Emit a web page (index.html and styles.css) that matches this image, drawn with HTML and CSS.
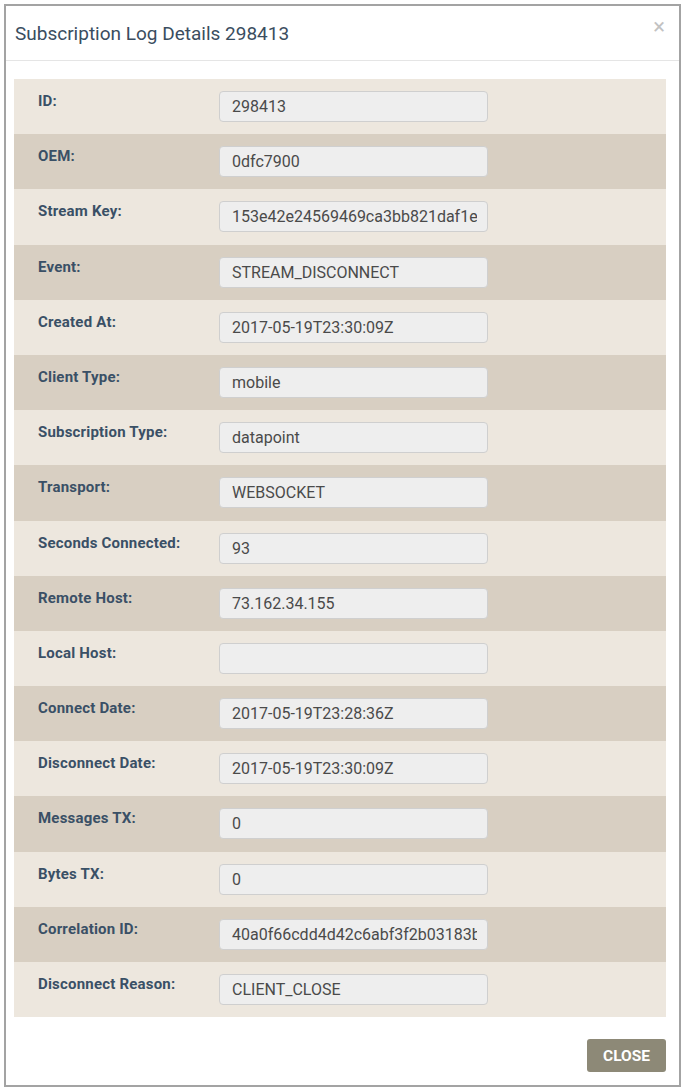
FILE: index.html
```html
<!DOCTYPE html>
<html lang="en">
<head>
  <meta charset="UTF-8" />
  <meta name="viewport" content="width=device-width, initial-scale=1.0" />
  <title>Subscription Log Details</title>
  <link rel="stylesheet" href="styles.css">
</head>
<body>
  <!-- Modal -->
  <div class="modal">
    <div class="modal-header">
      <h4>Subscription Log Details 298413</h4>
      <span class="close-x">&times;</span>
    </div>

    <div class="modal-body">
      <div class="row"><label>ID:</label><input type="text" value="298413" readonly /></div>
      <div class="row"><label>OEM:</label><input type="text" value="0dfc7900" readonly /></div>
      <div class="row"><label>Stream Key:</label><input type="text" value="153e42e24569469ca3bb821daf1e7c0d" readonly /></div>
      <div class="row"><label>Event:</label><input type="text" value="STREAM_DISCONNECT" readonly /></div>
      <div class="row"><label>Created At:</label><input type="text" value="2017-05-19T23:30:09Z" readonly /></div>
      <div class="row"><label>Client Type:</label><input type="text" value="mobile" readonly /></div>
      <div class="row"><label>Subscription Type:</label><input type="text" value="datapoint" readonly /></div>
      <div class="row"><label>Transport:</label><input type="text" value="WEBSOCKET" readonly /></div>
      <div class="row"><label>Seconds Connected:</label><input type="text" value="93" readonly /></div>
      <div class="row"><label>Remote Host:</label><input type="text" value="73.162.34.155" readonly /></div>
      <div class="row"><label>Local Host:</label><input type="text" value="" readonly /></div>
      <div class="row"><label>Connect Date:</label><input type="text" value="2017-05-19T23:28:36Z" readonly /></div>
      <div class="row"><label>Disconnect Date:</label><input type="text" value="2017-05-19T23:30:09Z" readonly /></div>
      <div class="row"><label>Messages TX:</label><input type="text" value="0" readonly /></div>
      <div class="row"><label>Bytes TX:</label><input type="text" value="0" readonly /></div>
      <div class="row"><label>Correlation ID:</label><input type="text" value="40a0f66cdd4d42c6abf3f2b03183b2e1" readonly /></div>
      <div class="row"><label>Disconnect Reason:</label><input type="text" value="CLIENT_CLOSE" readonly /></div>
    </div>

    <div class="modal-footer">
      <button>CLOSE</button>
    </div>
  </div>
</body>
</html>
```

FILE: styles.css
```css
body {
  margin: 0;
  padding: 4px;
  font-family: Roboto, "Liberation Sans", sans-serif;
  background: #ffffff;
}
.modal {
  width: 673px;
  height: 1079px;
  border: 2px solid #a3a3a3;
  background: white;
  display: flex;
  flex-direction: column;
}
.modal-header {
  height: 54px;
  border-bottom: 1px solid #e5e5e5;
  display: flex;
  align-items: center;
  justify-content: space-between;
  padding: 0 14px 0 9px;
}
.modal-header h4 {
  margin: 0;
  font-size: 19px;
  font-weight: normal;
  color: #3a4d60;
}
.close-x {
  font-size: 22px;
  color: #c2c2c2;
  align-self: flex-start;
  margin-top: 10px;
  line-height: 22px;
}
.modal-body {
  padding: 18px 13px 0 8px;
}
.row {
  display: grid;
  grid-template-columns: 181px 269px;
  height: 55.2px;
  box-sizing: border-box;
  padding: 12px 24px 0 24px;
  background-color: #ede7de;
}
.row:nth-child(even) {
  background-color: #d8cfc2;
}
.row label {
  font-size: 15px;
  font-weight: bold;
  line-height: 20px;
  color: #3a5066;
  letter-spacing: 0.2px;
}
.row input {
  height: 31px;
  box-sizing: border-box;
  padding: 0 10px 0 12px;
  font-family: Roboto, "Liberation Sans", sans-serif;
  font-size: 16px;
  color: #4a4a4a;
  background: #eeeeee;
  border: 1px solid #cfcfcf;
  border-radius: 4px;
  outline: none;
}
.modal-footer {
  display: flex;
  justify-content: flex-end;
  padding: 22px 13px 0 0;
}
.modal-footer button {
  width: 79px;
  height: 33px;
  border: none;
  border-radius: 3px;
  background-color: #8d8977;
  color: white;
  font-family: Roboto, "Liberation Sans", sans-serif;
  font-size: 15.5px;
  font-weight: bold;
  cursor: pointer;
}
```
